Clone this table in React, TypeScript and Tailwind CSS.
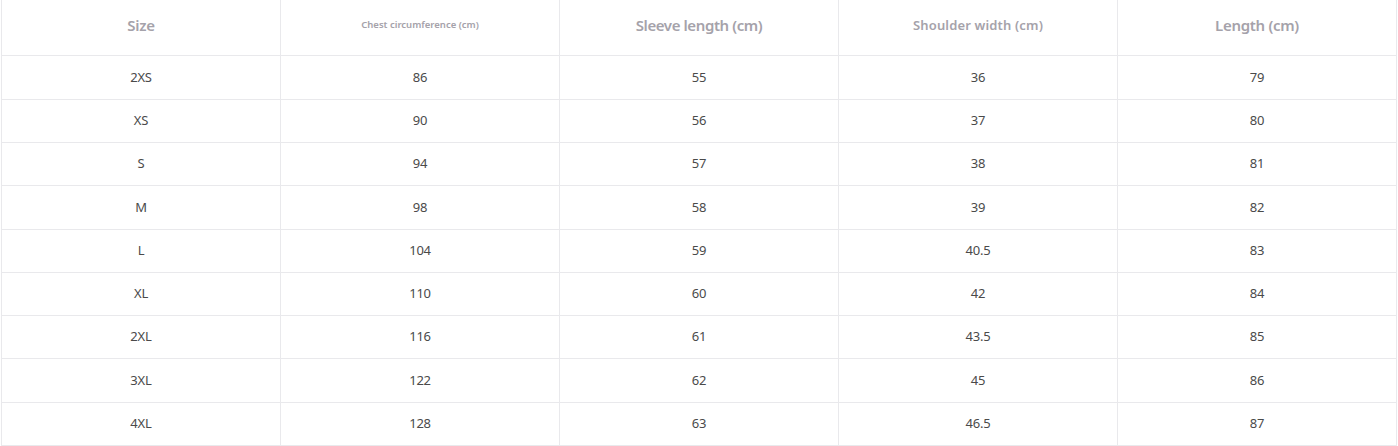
const headers = [
  { label: "Size", cls: "text-[15px] tracking-[-0.2px]" },
  { label: "Chest circumference (cm)", cls: "text-[9.5px] tracking-[0px]" },
  { label: "Sleeve length (cm)", cls: "text-[15px] tracking-[-0.4px]" },
  { label: "Shoulder width (cm)", cls: "text-[13px] tracking-[0.15px]" },
  { label: "Length (cm)", cls: "text-[15px] tracking-[-0.3px]" },
];

const rows: { h: string; cells: string[] }[] = [
  { h: "h-[44px]", cells: ["2XS", "86", "55", "36", "79"] },
  { h: "h-[43px]", cells: ["XS", "90", "56", "37", "80"] },
  { h: "h-[43px]", cells: ["S", "94", "57", "38", "81"] },
  { h: "h-[44px]", cells: ["M", "98", "58", "39", "82"] },
  { h: "h-[43px]", cells: ["L", "104", "59", "40.5", "83"] },
  { h: "h-[43px]", cells: ["XL", "110", "60", "42", "84"] },
  { h: "h-[43px]", cells: ["2XL", "116", "61", "43.5", "85"] },
  { h: "h-[44px]", cells: ["3XL", "122", "62", "45", "86"] },
  { h: "h-[43px]", cells: ["4XL", "128", "63", "46.5", "87"] },
];

export default function App() {
  return (
    <div className="w-[1398px] h-[446px] bg-white overflow-hidden font-['Noto_Sans','Open_Sans',sans-serif]">
      <div className="ml-[1px] w-[1396px] border-l border-[#e9e9ec]">
        <div className="grid grid-cols-[279px_279px_279px_279px_279px] h-[56px] border-b border-[#e9e9ec]">
          {headers.map((h) => (
            <div
              key={h.label}
              className={`flex items-center justify-center border-r border-[#e9e9ec] pb-[4px] font-semibold text-[#a5a2aa] ${h.cls}`}
            >
              {h.label}
            </div>
          ))}
        </div>
        {rows.map((r) => (
          <div
            key={r.cells[0]}
            className={`grid grid-cols-[279px_279px_279px_279px_279px] border-b border-[#e9e9ec] ${r.h}`}
          >
            {r.cells.map((c, i) => (
              <div
                key={i}
                className="flex items-center justify-center border-r border-[#e9e9ec] text-[13px] tracking-[-0.2px] text-[#4a4a4a]"
              >
                {c}
              </div>
            ))}
          </div>
        ))}
      </div>
    </div>
  );
}
